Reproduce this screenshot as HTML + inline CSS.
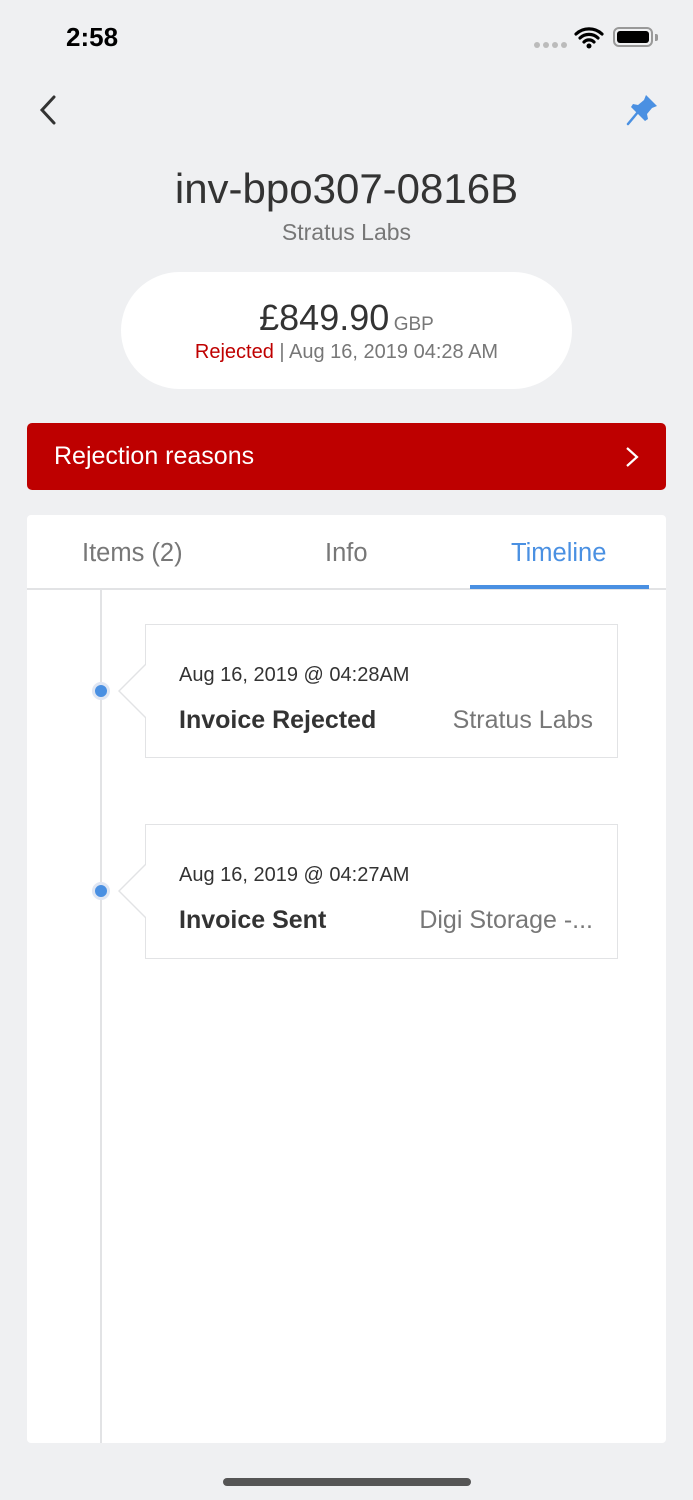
<!DOCTYPE html>
<html><head><meta charset="utf-8"><style>
body{margin:0;width:693px;height:1500px;background:#eff0f2;font-family:"Liberation Sans",sans-serif;position:relative;overflow:hidden}
.a{position:absolute}
.box{position:absolute;left:145px;width:471px;background:#fff;border:1.5px solid #e2e3e5}
.arr{position:absolute;left:-28px;width:0;height:0;border-top:28px solid transparent;border-bottom:28px solid transparent;border-right:28px solid #e2e3e5}
.arr i{position:absolute;left:2px;top:-26px;border-top:26px solid transparent;border-bottom:26px solid transparent;border-right:26px solid #fff}
.dot{position:absolute;left:92px;width:12px;height:12px;border-radius:50%;background:#4a90e2;border:3px solid #dfe6f3}
</style></head><body>
<div class="a" style="left:66px;top:22px;font-size:26px;font-weight:bold;color:#000">2:58</div>
<div class="a" style="left:534px;top:42px;display:flex;gap:3px"><span style="width:6px;height:6px;border-radius:50%;background:#bbb"></span><span style="width:6px;height:6px;border-radius:50%;background:#bbb"></span><span style="width:6px;height:6px;border-radius:50%;background:#bbb"></span><span style="width:6px;height:6px;border-radius:50%;background:#bbb"></span></div>
<svg class="a" style="left:574px;top:26px" width="30" height="24" viewBox="0 0 30 24"><path d="M2 8a19 19 0 0 1 26 0M6 12a13 13 0 0 1 18 0M10 16a7 7 0 0 1 10 0" stroke="#000" stroke-width="3.2" fill="none" stroke-linecap="round"/><circle cx="15" cy="20" r="2.5"/></svg>
<div class="a" style="left:613px;top:27px;width:40px;height:20px;border:2px solid #999;border-radius:6px;box-sizing:border-box"><div style="margin:2px;height:12px;background:#000;border-radius:3px"></div></div>
<div class="a" style="left:655px;top:34px;width:3px;height:7px;background:#999;border-radius:0 2px 2px 0"></div>
<svg class="a" style="left:36px;top:94px" width="24" height="32"><path d="M18 3L6 16l12 13" stroke="#333" stroke-width="3" fill="none" stroke-linecap="round"/></svg>
<svg class="a" style="left:624px;top:92px" width="36" height="34" viewBox="0 0 36 34"><path d="M22 3l11 11-5 2-5 6 1 5-3 2-14-14 2-3 5 1 6-5z" fill="#4a90e2"/><path d="M14 20L4 32" stroke="#4a90e2" stroke-width="2.5" stroke-linecap="round"/></svg>
<div class="a" style="left:0;width:693px;top:165px;text-align:center;font-size:42px;color:#333">inv-bpo307-0816B</div>
<div class="a" style="left:0;width:693px;top:219px;text-align:center;font-size:23px;color:#777">Stratus Labs</div>
<div class="a" style="left:121px;top:272px;width:451px;height:117px;background:#fff;border-radius:59px"></div>
<div class="a" style="left:0;width:693px;top:297px;text-align:center;color:#333"><span style="font-size:36px">£849.90</span> <span style="font-size:19px;color:#777">GBP</span></div>
<div class="a" style="left:0;width:693px;top:341px;text-align:center;font-size:20px;color:#777"><span style="color:#bf0000">Rejected</span> | Aug 16, 2019 04:28 AM</div>
<div class="a" style="left:27px;top:423px;width:639px;height:67px;background:#be0000;border-radius:5px"></div>
<div class="a" style="left:54px;top:442px;font-size:25px;color:#fff">Rejection reasons</div>
<svg class="a" style="left:622px;top:445px" width="20" height="24"><path d="M5 3l10 9-10 9" stroke="#fff" stroke-width="2.2" fill="none"/></svg>
<div class="a" style="left:27px;top:515px;width:639px;height:928px;background:#fff;border-radius:4px"></div>
<div class="a" style="left:27px;top:588px;width:639px;height:2px;background:#e2e3e5"></div>
<div class="a" style="left:470px;top:585px;width:179px;height:4px;background:#4a90e2"></div>
<div class="a" style="left:82px;top:539px;font-size:25.5px;color:#777">Items (2)</div>
<div class="a" style="left:325px;top:539px;font-size:25.5px;color:#777">Info</div>
<div class="a" style="left:511px;top:539px;font-size:25.5px;color:#4a90e2">Timeline</div>
<div class="a" style="left:100px;top:590px;width:2px;height:853px;background:#e2e3e5"></div>
<div class="box" style="top:624px;height:132px"><div class="arr" style="top:38px"><i></i></div>
<div class="a" style="left:33px;top:39px;font-size:20px;color:#333">Aug 16, 2019 @ 04:28AM</div>
<div class="a" style="left:33px;top:81px;font-size:25px;font-weight:bold;color:#333">Invoice Rejected</div>
<div class="a" style="right:24px;top:81px;font-size:25px;color:#777">Stratus Labs</div></div>
<div class="dot" style="top:682px"></div>
<div class="box" style="top:824px;height:133px"><div class="arr" style="top:38px"><i></i></div>
<div class="a" style="left:33px;top:39px;font-size:20px;color:#333">Aug 16, 2019 @ 04:27AM</div>
<div class="a" style="left:33px;top:81px;font-size:25px;font-weight:bold;color:#333">Invoice Sent</div>
<div class="a" style="right:24px;top:81px;font-size:25px;color:#777">Digi Storage -...</div></div>
<div class="dot" style="top:882px"></div>
<div class="a" style="left:223px;top:1478px;width:248px;height:8px;border-radius:4px;background:#555"></div>
</body></html>
